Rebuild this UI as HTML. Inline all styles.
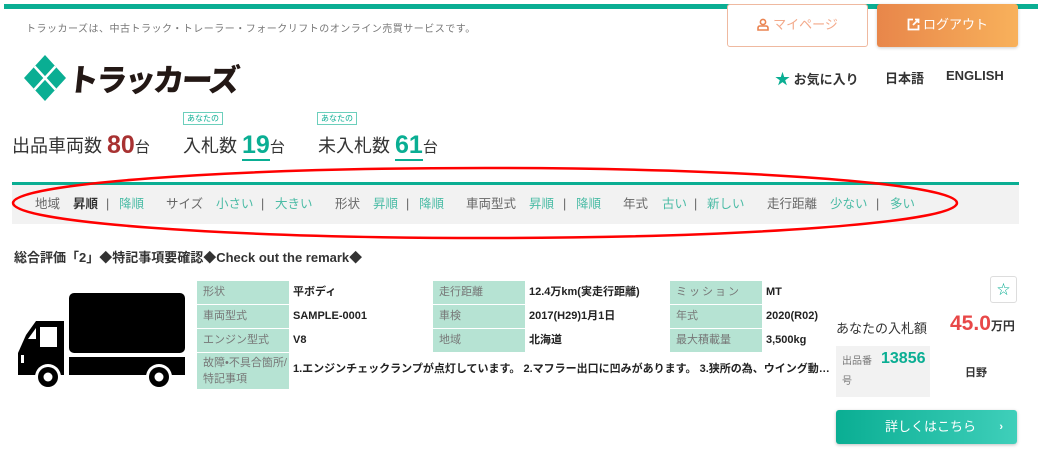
<!DOCTYPE html>
<html><head><meta charset="utf-8"><style>
*{margin:0;padding:0;box-sizing:border-box}
body{width:1038px;height:463px;background:#fff;font-family:"Liberation Sans","Noto Sans CJK JP",sans-serif;color:#333;position:relative;overflow:hidden}
.a{position:absolute;white-space:nowrap}
.lab{position:absolute;background:#b6e3d3;color:#777;font-size:11px;padding-left:6px}
.val{position:absolute;font-size:11px;font-weight:bold;color:#222;line-height:23px;white-space:nowrap}
.fl{position:absolute;top:196px;font-size:12.5px;color:#666;line-height:17px;height:17px}
.t{color:#4cbca6}
</style></head><body>
<div class="a" style="left:4px;top:4px;width:1034px;height:5px;background:#0aae93"></div>
<div class="a" style="left:26px;top:20px;font-size:10px;color:#777;letter-spacing:0.5px">トラッカーズは、中古トラック・トレーラー・フォークリフトのオンライン売買サービスです。</div>
<div class="a" style="left:727px;top:4px;width:141px;height:43px;background:#fff;border:1px solid #efb9a0;border-radius:3px;color:#f3a98a;font-size:13px;text-align:center;line-height:40px">
<svg width="12" height="13" viewBox="0 0 12 13" style="vertical-align:-2px;margin-right:4px"><circle cx="6" cy="4" r="2.6" fill="none" stroke="#ea8350" stroke-width="1.6"/><path d="M1 12V10Q1 8 3 8H9Q11 8 11 10V12Z" fill="none" stroke="#ea8350" stroke-width="1.6"/></svg>マイページ</div>
<div class="a" style="left:877px;top:4px;width:141px;height:43px;background:linear-gradient(90deg,#e8864a,#f8b15b);border-radius:3px;color:#fff;font-size:13px;text-align:center;line-height:42px;box-shadow:0 1px 3px rgba(0,0,0,.2)">
<svg width="13" height="13" viewBox="0 0 13 13" style="vertical-align:-2px;margin-right:3px"><path d="M6 1.5H1.5V11.5H11.5V7" fill="none" stroke="#fff" stroke-width="1.8"/><path d="M6 7L11.5 1.5M8 1.5H11.5V5" fill="none" stroke="#fff" stroke-width="1.8"/></svg>ログアウト</div>
<svg class="a" style="left:24px;top:55px" width="42" height="46" viewBox="0 0 42 46"><path d="M21 0L42 23L21 46L0 23Z" fill="#0aae93"/><path d="M10.5 11.5L31.5 34.5M21 23L10.5 34.5M31.5 11.5L21 23" stroke="#fff" stroke-width="2.5"/></svg>
<div class="a" style="left:68px;top:58px;font-size:31px;font-weight:900;color:#231815;letter-spacing:-2.5px;line-height:40px;font-family:'Noto Sans CJK JP',sans-serif;transform:skewX(-6deg)">トラッカーズ</div>
<div class="a" style="left:775px;top:68px;font-size:13px;font-weight:bold;color:#333"><span style="color:#0aae93;font-size:15px">★</span> お気に入り</div>
<div class="a" style="left:885px;top:68px;font-size:13px;font-weight:bold;color:#333">日本語</div>
<div class="a" style="left:946px;top:68px;font-size:13px;font-weight:bold;color:#333">ENGLISH</div>
<div class="a" style="left:12px;top:131px;font-size:18px;color:#333">出品車両数 <span style="color:#a83232;font-size:25px;font-weight:bold;vertical-align:-1px">80</span><span style="font-size:15px">台</span></div>
<div class="a" style="left:183px;top:112px;border:1px solid #6ccfbc;color:#0aae93;font-size:8px;padding:0 3px;line-height:11px;background:#fff">あなたの</div>
<div class="a" style="left:183px;top:131px;font-size:18px;color:#333">入札数 <span style="color:#0aae93;font-size:25px;font-weight:bold;vertical-align:-1px;border-bottom:2px solid #0aae93">19</span><span style="font-size:15px">台</span></div>
<div class="a" style="left:317px;top:112px;border:1px solid #6ccfbc;color:#0aae93;font-size:8px;padding:0 3px;line-height:11px;background:#fff">あなたの</div>
<div class="a" style="left:318px;top:131px;font-size:18px;color:#333">未入札数 <span style="color:#0aae93;font-size:25px;font-weight:bold;vertical-align:-1px;border-bottom:2px solid #0aae93">61</span><span style="font-size:15px">台</span></div>
<div class="a" style="left:12px;top:182px;width:1007px;height:3px;background:#0aae93"></div>
<div class="a" style="left:12px;top:185px;width:1007px;height:39px;background:#f2f2f2"></div>
<div class="fl" style="left:35px">地域</div><div class="fl" style="left:73px;color:#333;font-weight:bold">昇順</div><div class="fl" style="left:106px">|</div><div class="fl t" style="left:119px">降順</div>
<div class="fl" style="left:166px">サイズ</div><div class="fl t" style="left:216px">小さい</div><div class="fl" style="left:261px">|</div><div class="fl t" style="left:275px">大きい</div>
<div class="fl" style="left:335px">形状</div><div class="fl t" style="left:373px">昇順</div><div class="fl" style="left:406px">|</div><div class="fl t" style="left:419px">降順</div>
<div class="fl" style="left:466px">車両型式</div><div class="fl t" style="left:529px">昇順</div><div class="fl" style="left:563px">|</div><div class="fl t" style="left:576px">降順</div>
<div class="fl" style="left:623px">年式</div><div class="fl t" style="left:662px">古い</div><div class="fl" style="left:694px">|</div><div class="fl t" style="left:707px">新しい</div>
<div class="fl" style="left:767px">走行距離</div><div class="fl t" style="left:830px">少ない</div><div class="fl" style="left:876px">|</div><div class="fl t" style="left:890px">多い</div>
<svg class="a" style="left:0;top:160px" width="1038" height="90"><ellipse cx="485" cy="43" rx="472" ry="35" fill="none" stroke="#f00" stroke-width="2.5"/></svg>
<div class="a" style="left:14px;top:247px;font-size:13px;font-weight:bold;color:#333">総合評価「2」◆特記事項要確認◆Check out the remark◆</div>
<svg class="a" style="left:16px;top:291px" width="170" height="100" viewBox="0 0 170 100"><rect x="53" y="2" width="116" height="60" rx="5" fill="#000"/><rect x="53" y="66" width="116" height="18" fill="#000"/><path d="M2 84V62L10 44L20 30H48V84Z" fill="#000"/><rect x="24" y="36" width="17" height="20" fill="#fff"/><path d="M12 48L20 37V48Z" fill="#fff"/><rect x="5" y="64" width="3" height="8" fill="#fff"/><circle cx="32" cy="86" r="13" fill="#fff"/><circle cx="32" cy="86" r="10" fill="#000"/><circle cx="32" cy="86" r="4.5" fill="#fff"/><circle cx="143" cy="86" r="13" fill="#fff"/><circle cx="143" cy="86" r="10" fill="#000"/><circle cx="143" cy="86" r="4.5" fill="#fff"/></svg>
<div class="lab" style="left:197px;top:281px;width:92px;height:23px;line-height:23px">形状</div><div class="val" style="left:293px;top:281px">平ボディ</div>
<div class="lab" style="left:197px;top:305px;width:92px;height:23px;line-height:23px">車両型式</div><div class="val" style="left:293px;top:305px">SAMPLE-0001</div>
<div class="lab" style="left:197px;top:329px;width:92px;height:23px;line-height:23px">エンジン型式</div><div class="val" style="left:293px;top:329px">V8</div>
<div class="lab" style="left:197px;top:353px;width:92px;height:36px;line-height:16px;padding-top:2px">故障•不具合箇所/<br>特記事項</div><div class="val" style="left:293px;top:358px;width:542px;overflow:hidden;text-overflow:ellipsis">1.エンジンチェックランプが点灯しています。 2.マフラー出口に凹みがあります。 3.狭所の為、ウイング動作を確認できておりません。</div>
<div class="lab" style="left:433px;top:281px;width:92px;height:23px;line-height:23px">走行距離</div><div class="val" style="left:529px;top:281px">12.4万km(実走行距離)</div>
<div class="lab" style="left:433px;top:305px;width:92px;height:23px;line-height:23px">車検</div><div class="val" style="left:529px;top:305px">2017(H29)1月1日</div>
<div class="lab" style="left:433px;top:329px;width:92px;height:23px;line-height:23px">地域</div><div class="val" style="left:529px;top:329px">北海道</div>
<div class="lab" style="left:670px;top:281px;width:92px;height:23px;line-height:23px;letter-spacing:2px">ミッション</div><div class="val" style="left:766px;top:281px">MT</div>
<div class="lab" style="left:670px;top:305px;width:92px;height:23px;line-height:23px">年式</div><div class="val" style="left:766px;top:305px">2020(R02)</div>
<div class="lab" style="left:670px;top:329px;width:92px;height:23px;line-height:23px">最大積載量</div><div class="val" style="left:766px;top:329px">3,500kg</div>
<div class="a" style="left:990px;top:276px;width:27px;height:27px;border:1px solid #ddd;border-radius:3px;text-align:center;line-height:25px;color:#0aae93;font-size:13px">☆</div>
<div class="a" style="left:836px;top:318px;font-size:13px;color:#333">あなたの入札額</div>
<div class="a" style="left:950px;top:312px;font-size:21px;font-weight:bold;color:#e84848">45.0<span style="font-size:12px;color:#333">万円</span></div>
<div class="a" style="left:836px;top:346px;width:94px;height:51px;background:#f2f2f2"></div>
<div class="a" style="left:842px;top:352px;font-size:10px;color:#777;line-height:20px">出品番<br>号</div>
<div class="a" style="left:881px;top:350px;font-size:16px;font-weight:bold;color:#0aae93">13856</div>
<div class="a" style="left:965px;top:364px;font-size:11px;font-weight:bold;color:#333">日野</div>
<div class="a" style="left:836px;top:410px;width:181px;height:34px;border-radius:3px;background:linear-gradient(90deg,#0aae93,#3fcfba);color:#fff;font-size:13px;line-height:34px;box-shadow:0 1px 3px rgba(0,0,0,.25)"><span style="margin-left:49px">詳しくはこちら</span><span style="position:absolute;right:14px;font-size:11px;font-weight:bold">›</span></div>
</body></html>
